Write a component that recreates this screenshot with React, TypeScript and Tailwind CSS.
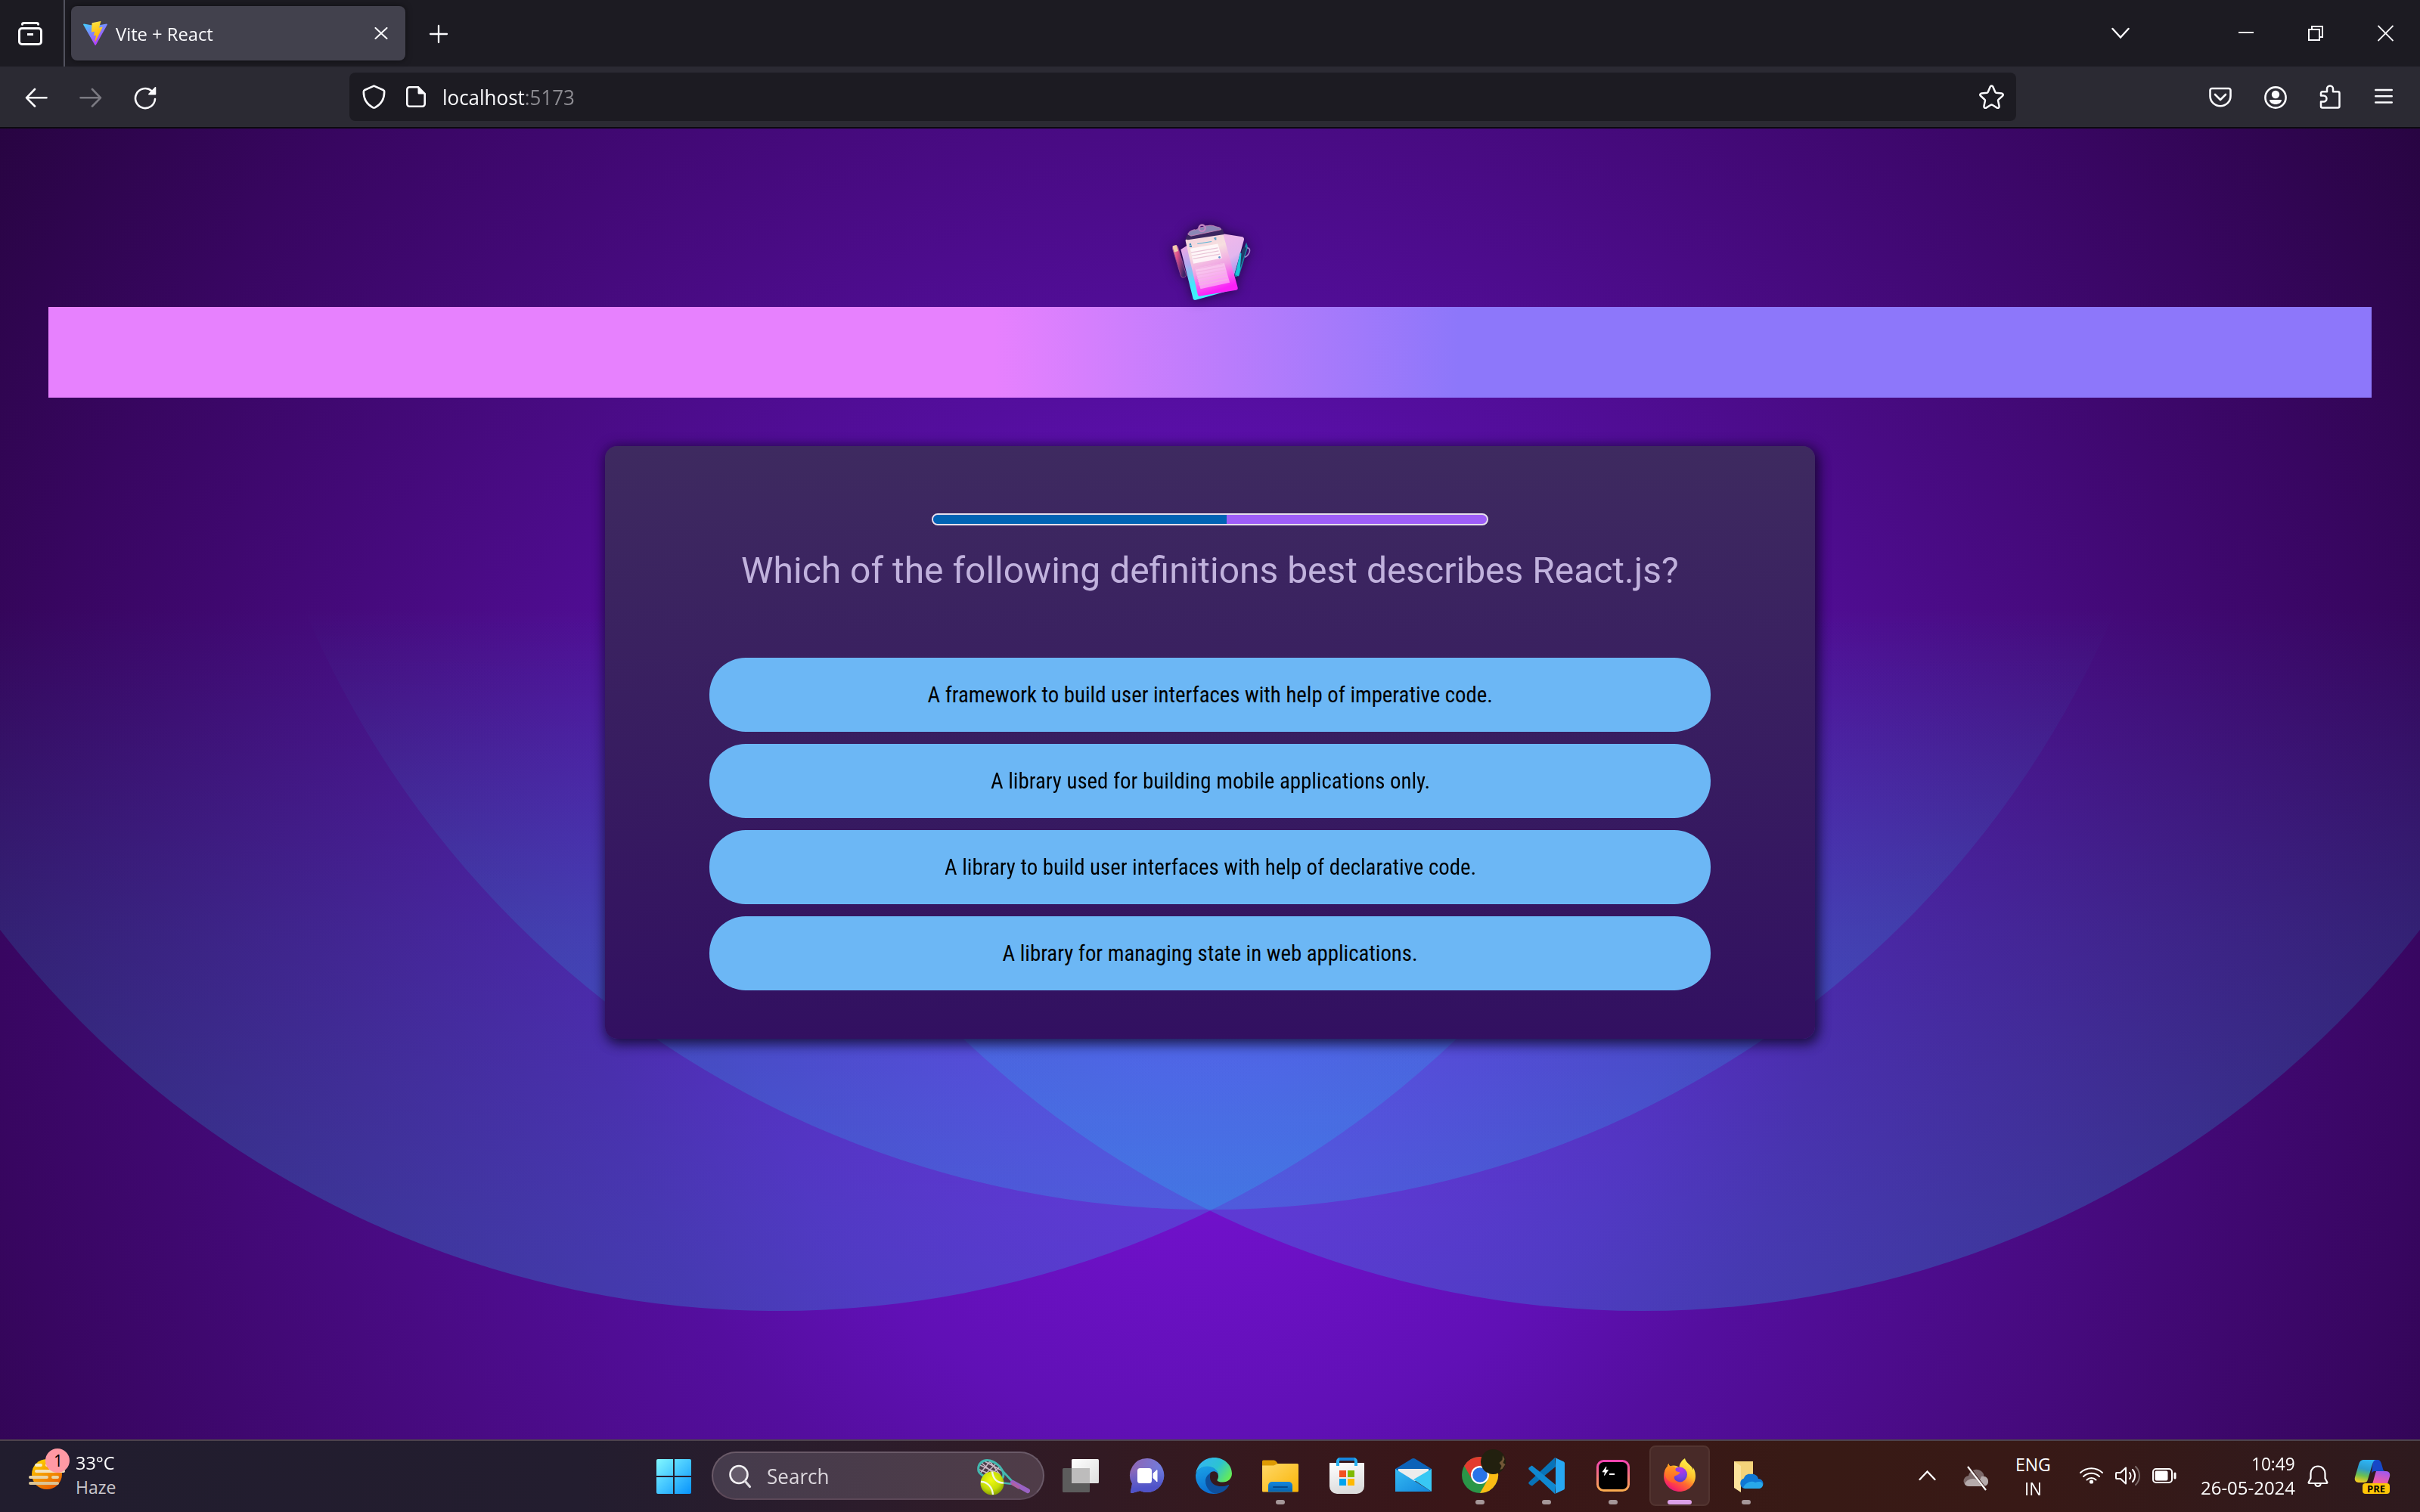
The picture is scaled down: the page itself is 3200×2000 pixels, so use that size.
import { useLayoutEffect, useRef, useState } from "react";
import type { ReactNode } from "react";

/** One line of text stretched horizontally so that it spans exactly `width` pixels. */
function Fit({ width, className = "", children }: { width: number; className?: string; children: ReactNode }) {
  const ref = useRef<HTMLSpanElement>(null);
  const [scale, setScale] = useState(1);
  useLayoutEffect(() => {
    if (ref.current) setScale(width / ref.current.offsetWidth);
  }, [width]);
  return (
    <span className={"block whitespace-nowrap " + className} style={{ width }}>
      <span ref={ref} className="inline-block origin-left" style={{ transform: `scaleX(${scale})` }}>
        {children}
      </span>
    </span>
  );
}

function ViteLogo() {
  return (
    <svg className="h-8 w-8 shrink-0" viewBox="0 0 32 32">
      <defs>
        <linearGradient id="viteA" x1="0" y1="0" x2="0.6" y2="1">
          <stop offset="0" stopColor="#41d1ff" />
          <stop offset="1" stopColor="#bd34fe" />
        </linearGradient>
        <linearGradient id="viteB" x1="0.4" y1="0" x2="0.6" y2="1">
          <stop offset="0" stopColor="#ffea83" />
          <stop offset="0.1" stopColor="#ffdd35" />
          <stop offset="1" stopColor="#ffa800" />
        </linearGradient>
      </defs>
      <path d="M31.8 4.8 16.8 31.5a.8.8 0 0 1-1.4 0L.2 4.8a.8.8 0 0 1 .9-1.2L16 6.3l14.9-2.7a.8.8 0 0 1 .9 1.2Z" fill="url(#viteA)" />
      <path d="M23 0 12 2.200a.5.500 0 0 0-.4.400l-.7 11.500a.4.400 0 0 0 .5.400l3.100-.7a.4.400 0 0 1 .5.500l-.9 4.500a.4.400 0 0 0 .5.500l1.900-.6a.4.400 0 0 1 .5.500l-1.500 7.100c-.1.400.5.700.7.300l.2-.2 9-18a.4.400 0 0 0-.5-.6l-3.200.6a.4.400 0 0 1-.5-.5l2.100-7.200A.4.400 0 0 0 23 0Z" fill="url(#viteB)" />
    </svg>
  );
}

function TabStrip() {
  return (
    <div className="flex h-[88px] items-start bg-[#1c1b22]">
      <svg className="mt-7 ml-6 h-8 w-8" viewBox="0 0 32 32" fill="none" stroke="#fbfbfe" strokeLinecap="round">
        <path d="M5.500 4.200C5.500 2.800 6.500 2.500 7.500 2.500h17c1 0 2 .3 2 1.700" strokeWidth="3" />
        <rect x="1.500" y="9.500" width="29" height="21" rx="3.500" strokeWidth="3" />
        <path d="M12 17.500h8" strokeWidth="3" strokeLinecap="butt" />
      </svg>
      <div className="ml-[28px] h-[88px] w-[2px] bg-[#52525e]" />
      <div className="mt-2 ml-2 flex h-[72px] w-[442px] rounded-lg bg-[#42414d] pt-5 pl-4 shadow-[0_0_8px_rgba(0,0,0,0.5)]">
        <ViteLogo />
        <Fit width={129} className="mt-px ml-[11px] text-[23px] leading-8 text-[#fbfbfe]">Vite + React</Fit>
        <svg className="mt-2 ml-[213px] h-4 w-[18px]" viewBox="0 0 18 16" stroke="#fbfbfe" strokeWidth="2" strokeLinecap="round">
          <path d="m1.500 1 15 14m0-14-15 14" />
        </svg>
      </div>
      <svg className="mt-8 ml-[31px] h-[26px] w-[26px]" viewBox="0 0 26 26" stroke="#fbfbfe" strokeWidth="2.300" strokeLinecap="round">
        <path d="M2 13h22M13 2v22" />
      </svg>
      <div className="grow" />
      <svg className="mt-9 mr-[144px] h-4 w-6" viewBox="0 0 24 16" fill="none" stroke="#fbfbfe" strokeWidth="2.400" strokeLinecap="round">
        <path d="m1.500 2 10.500 11.500L22.500 2" />
      </svg>
      <div className="mt-[42px] mr-[72px] h-[2px] w-5 bg-[#fbfbfe]" />
      <svg className="mt-[34px] mr-[72px] h-5 w-5" viewBox="0 0 20 20" fill="none" stroke="#fbfbfe" strokeWidth="2">
        <rect x="1" y="5" width="14" height="14" />
        <path d="M5 5V1h14v14h-4" />
      </svg>
      <svg className="mt-[33px] mr-[35px] h-[22px] w-[21px]" viewBox="0 0 21 22" stroke="#fbfbfe" strokeWidth="1.800">
        <path d="M.5 1 20.500 21M20.500 1 .5 21" />
      </svg>
    </div>
  );
}

function Toolbar() {
  return (
    <div className="flex h-[80px] items-start bg-[#2b2a33]">
      <svg className="mt-[28px] ml-[33px] h-[26px] w-[30px]" viewBox="0 0 30 26" fill="none" stroke="#fbfbfe" strokeWidth="2.600" strokeLinecap="round" strokeLinejoin="round">
        <path d="M28.500 13.300H2M13 2 2 13.300 13 24.500" />
      </svg>
      <svg className="mt-[28px] ml-[42px] h-[26px] w-[30px]" viewBox="0 0 30 26" fill="none" stroke="#7b7a82" strokeWidth="2.600" strokeLinecap="round" strokeLinejoin="round">
        <path d="M1.500 13.300H28M17 2l11 11.300L17 24.500" />
      </svg>
      <svg className="mt-[27px] ml-[42px] h-[30px] w-[30px]" viewBox="0 0 30 30" fill="none">
        <path d="M28 16A13 13 0 1 1 23.500 5.200" stroke="#fbfbfe" strokeWidth="2.600" strokeLinecap="round" />
        <path d="M29.300 1v8.500a1 1 0 0 1-1 1H20c-.9 0-1.300-1-.7-1.600l8.300-8.500c.6-.6 1.700-.3 1.700.6Z" fill="#fbfbfe" />
      </svg>
      <div className="mt-2 ml-[255px] flex h-16 w-[2204px] rounded-lg bg-[#1c1b22]">
        <svg className="mt-4 ml-[17px] h-8 w-[31px]" viewBox="0 0 31 32" fill="none" stroke="#fbfbfe" strokeWidth="2.600" strokeLinejoin="round">
          <path d="M15.500 1.600 27.600 7c1 .5 1.600 1.300 1.600 2.400 0 9.600-4.600 16.600-12 20.700-1 .5-2.400.5-3.400 0C6.400 26 1.800 19 1.800 9.400 1.800 8.300 2.400 7.500 3.400 7Z" />
        </svg>
        <svg className="mt-[18px] ml-[27px] h-[28px] w-[26px]" viewBox="0 0 26 28" fill="none">
          <path d="M4.500 1.300H16l8.700 8.700v13.500a3.200 3.200 0 0 1-3.200 3.200h-17a3.200 3.200 0 0 1-3.200-3.200v-19a3.200 3.200 0 0 1 3.200-3.200Z" stroke="#fbfbfe" strokeWidth="2.600" />
          <path d="M15.500 1v8a1.500 1.500 0 0 0 1.500 1.500h8Z" fill="#fbfbfe" />
        </svg>
        <Fit width={175} className="mt-[15px] ml-[22px] text-[27px] leading-9 text-[#fbfbfe]">
          localhost<span className="text-[#8c8b91]">:5173</span>
        </Fit>
        <svg className="mt-4 ml-auto mr-4 h-[32px] w-[33px]" viewBox="0 0 33 32" fill="none" stroke="#fbfbfe" strokeWidth="2.500" strokeLinejoin="round">
          <path d="M14.700 2.800c.7-1.600 2.900-1.600 3.600 0l3 7c.2.500.7.800 1.200.9l7.400.7c1.700.2 2.400 2.200 1.100 3.400l-5.400 4.900c-.5.400-.6 1-.5 1.600l1.500 7.200c.4 1.700-1.400 3-2.900 2.100l-6.200-3.800a2 2 0 0 0-2 0l-6.200 3.800c-1.500.9-3.300-.4-2.900-2.100l1.500-7.200c.1-.6 0-1.200-.5-1.600L2 14.800c-1.300-1.200-.6-3.200 1.100-3.400l7.400-.7c.5-.1 1-.4 1.200-.9Z" />
        </svg>
      </div>
      <svg className="mt-[27px] ml-[255px] h-[27px] w-[30px]" viewBox="0 0 30 27" fill="none" stroke="#fbfbfe" strokeWidth="2.600" strokeLinecap="round" strokeLinejoin="round">
        <path d="M4 2h22a2.500 2.500 0 0 1 2.500 2.500V12a13.500 13.200 0 0 1-27 0V4.500A2.500 2.500 0 0 1 4 2Z" />
        <path d="m8 10 7 7 7-7" />
      </svg>
      <svg className="mt-[26px] ml-[43px] h-[30px] w-[30px]" viewBox="0 0 30 30">
        <circle cx="15" cy="15" r="13.600" fill="none" stroke="#fbfbfe" strokeWidth="2.600" />
        <circle cx="15" cy="11" r="5.200" fill="#fbfbfe" />
        <path d="M7 18h16c0 3.800-3.800 6-8 6s-8-2.200-8-6Z" fill="#fbfbfe" />
      </svg>
      <svg className="mt-[24px] ml-[43px] h-[32px] w-[28px]" viewBox="0 0 28 32" fill="none" stroke="#fbfbfe" strokeWidth="2.500" strokeLinejoin="round">
        <path d="M4 9.300h6V5.500a4 4 0 0 1 8 0v3.800h6.500a2 2 0 0 1 2 2V28.500a2 2 0 0 1-2 2H4a2 2 0 0 1-2-2V22.500h3.500a4 4 0 0 0 0-8H2v-3.200a2 2 0 0 1 2-2Z" />
      </svg>
      <svg className="mt-[29px] ml-[45px] h-[21px] w-[24px]" viewBox="0 0 24 21" stroke="#fbfbfe" strokeWidth="2.400" strokeLinecap="round">
        <path d="M1.200 2h21.600M1.200 10.300h21.600M1.200 18.500h21.600" />
      </svg>
    </div>
  );
}

function Backdrop() {
  return (
    <svg className="absolute inset-0 h-full w-full" viewBox="0 170 3200 1734" preserveAspectRatio="none">
      <defs>
        <radialGradient id="base" gradientUnits="userSpaceOnUse" cx="1600" cy="1300" r="2000">
          <stop offset="0" stopColor="#7914dc" />
          <stop offset="0.15" stopColor="#7011ca" />
          <stop offset="0.3" stopColor="#6010b5" />
          <stop offset="0.4" stopColor="#540e9e" />
          <stop offset="0.565" stopColor="#490b84" />
          <stop offset="0.8" stopColor="#380661" />
          <stop offset="1" stopColor="#26043e" />
        </radialGradient>
        <linearGradient id="disc" gradientUnits="userSpaceOnUse" x1="0" y1="800" x2="0" y2="1734">
          <stop offset="0" stopColor="#10e8ff" stopOpacity="0" />
          <stop offset="0.465" stopColor="#10e8ff" stopOpacity="0.12" />
          <stop offset="0.857" stopColor="#10e8ff" stopOpacity="0.19" />
          <stop offset="1" stopColor="#10e8ff" stopOpacity="0.205" />
        </linearGradient>
      </defs>
      <rect x="0" y="170" width="3200" height="1734" fill="url(#base)" />
      <circle cx="1028" cy="434" r="1300" fill="url(#disc)" />
      <circle cx="2172" cy="434" r="1300" fill="url(#disc)" />
      <circle cx="1600" cy="300" r="1300" fill="url(#disc)" />
    </svg>
  );
}

function QuizLogo() {
  return (
    <svg className="h-[116px] w-[126px] drop-shadow-[0_0_8px_rgba(12,5,32,0.7)]" viewBox="1 0 120 111">
      <defs>
        <linearGradient id="sheet" x1="0.2" y1="0" x2="0.500" y2="1">
          <stop offset="0" stopColor="#f3d3dc" />
          <stop offset="0.3" stopColor="#f7dfe0" />
          <stop offset="0.6" stopColor="#f0a0e4" />
          <stop offset="0.95" stopColor="#fb20f8" />
        </linearGradient>
        <linearGradient id="backSheet" x1="0.3" y1="0" x2="0.600" y2="1">
          <stop offset="0" stopColor="#f0b8ea" />
          <stop offset="0.5" stopColor="#e3b6ee" />
          <stop offset="1" stopColor="#8f8cf0" />
        </linearGradient>
        <linearGradient id="cyanSheet" x1="0" y1="0" x2="0.400" y2="1">
          <stop offset="0" stopColor="#f4a8e4" />
          <stop offset="0.35" stopColor="#b4a8f0" />
          <stop offset="0.7" stopColor="#3fe9fb" />
          <stop offset="1" stopColor="#40f4fc" />
        </linearGradient>
        <linearGradient id="pen" x1="0" y1="0" x2="0.300" y2="1">
          <stop offset="0" stopColor="#f0b8a8" />
          <stop offset="0.4" stopColor="#e0508c" />
          <stop offset="1" stopColor="#3c2468" />
        </linearGradient>
      </defs>
      <path d="M76 22 102 26c2 1 2.500 2.500 2 4L91 77 80 80Z" fill="url(#backSheet)" />
      <path d="M24 42 32 37 52 95 88 90 86 94 43 106c-2 .5-3-.5-3.500-2Z" fill="url(#cyanSheet)" />
      <path d="M30 31c0-1 .5-2 1.500-2L75 22c1.500 0 2.500.5 3 2l18 66c.5 2 0 3-2 3.500L49 101c-2 .5-3 0-3.500-2Z" fill="url(#sheet)" />
      <path d="M30 29 32 24 77 16l2 7-46 7Z" fill="#3b2660" />
      <path d="M33 23c1-4 5-5 8-6 4 1 5-3 9-3 3 0 4-2 8-2 4-1 8 0 10 1 3 1 7 1 7 4L37 25Z" fill="#8c87b6" stroke="#cc80b4" strokeWidth="0.800" />
      <circle cx="51" cy="15" r="4" fill="none" stroke="#c486c2" strokeWidth="2.200" />
      <path d="m35 36 2-1m-2 3h3" stroke="#2b87b8" strokeWidth="2" />
      <path d="m45 35 18-3" stroke="#58b4d6" strokeWidth="1" />
      <path d="m66 28 3-.5m-2 2 2-.3" stroke="#4f9cc8" strokeWidth="1.500" />
      <path d="m36 41 35-6 5 18-36 7Z" fill="#fffafc" opacity="0.85" />
      <path d="m42 66 37-7 7 25-37 8Z" fill="#ffe4f8" opacity="0.5" />
      <path d="m37 46 34-6m-33 10 34-6m-32.500 10 34-6" stroke="#e9c4d6" strokeWidth="1.200" />
      <path d="m42 67 36-7m-35 11 36-7m-35 11 36-7m-35 11 36-7m-35 11 36-7m-35 11 36-7" stroke="#f3b2e4" strokeWidth="1.200" />
      <circle cx="73" cy="52" r="1.300" fill="#5a8fc8" />
      <g transform="rotate(-17 23 58)">
        <rect x="19" y="36" width="7" height="42" rx="3" fill="url(#pen)" stroke="#9a4c94" strokeWidth="0.800" />
        <path d="M20 36h5v8h-5Z" fill="#f0cdae" />
      </g>
      <path d="m107 33 2 6-11 36-5 2-1-4Z" fill="#1a88a8" />
      <path d="m99 46 5 3-7 27-4-2Z" fill="#1cc4d8" />
      <path d="m101 43 4-5 2 3-8 26Z" fill="#223c68" />
      <path d="M108 40c6 0 3 9-3 12" fill="none" stroke="#a284cc" strokeWidth="1.600" />
    </svg>
  );
}

const answers = [
  { text: "A framework to build user interfaces with help of imperative code.", width: 747 },
  { text: "A library used for building mobile applications only.", width: 581 },
  { text: "A library to build user interfaces with help of declarative code.", width: 703 },
  { text: "A library for managing state in web applications.", width: 549 },
];

function QuizPage() {
  return (
    <main className="relative h-[1734px] overflow-hidden">
      <Backdrop />
      <div className="relative flex flex-col items-center">
        <div className="mt-[116px]">
          <QuizLogo />
        </div>
        <div className="mt-1 h-[120px] w-[3072px] bg-[linear-gradient(90deg,#e781fe_40.700%,#8d77fa_60.700%)]" />
        <section className="mt-16 flex h-[784px] w-[1600px] flex-col items-center rounded-2xl bg-[linear-gradient(180deg,#3e2a60_0%,#321061_100%)] shadow-[2px_2px_16px_2px_rgba(12,5,32,0.6),4px_8px_16px_0_rgba(12,5,32,0.4)]">
          <div className="mt-[89px] h-4 w-[736px] overflow-hidden rounded-lg border-2 border-[#e6e0ec] bg-[#9e5ef8]">
            <div className="h-full w-[53%] bg-[#0063b4]" />
          </div>
          <Fit width={1240} className="mt-8 font-['Roboto'] text-[48px] leading-[56px] text-[#c1b2dd]">
            Which of the following definitions best describes React.js?
          </Fit>
          <div className="mt-[87px] flex flex-col gap-4">
            {answers.map((a) => (
              <div key={a.text} className="flex h-[98px] w-[1324px] items-center justify-center rounded-[48px] bg-[#6cb7f5]">
                <Fit width={a.width} className="font-['Roboto_Condensed','Roboto'] text-[28.800px] leading-9 text-black [font-stretch:75%]">
                  {a.text}
                </Fit>
              </div>
            ))}
          </div>
        </section>
      </div>
    </main>
  );
}

function WeatherIcon() {
  return (
    <svg className="h-[56px] w-[56px]" viewBox="0 0 56 56">
      <defs>
        <linearGradient id="sun" x1="0.2" y1="0" x2="0.800" y2="1">
          <stop offset="0" stopColor="#ffd400" />
          <stop offset="1" stopColor="#e85400" />
        </linearGradient>
      </defs>
      <circle cx="24" cy="34" r="20" fill="url(#sun)" />
      <g strokeWidth="4" strokeLinecap="round">
        <path d="M10 22h6M24 22h6" stroke="#f7ecc4" />
        <path d="M10 30h36" stroke="#f3e2bc" />
        <path d="M2 38h22M32 38h6" stroke="#ead4a4" />
        <path d="M2 46h36" stroke="#dcc494" />
      </g>
      <circle cx="38" cy="16" r="16" fill="#ff99a4" />
    </svg>
  );
}

function StartIcon() {
  return (
    <svg className="h-[46px] w-[46px]" viewBox="0 0 46 46">
      <defs>
        <linearGradient id="win" gradientUnits="userSpaceOnUse" x1="0" y1="0" x2="46" y2="46">
          <stop offset="0" stopColor="#82f8ff" />
          <stop offset="0.5" stopColor="#44c6ff" />
          <stop offset="1" stopColor="#0893fb" />
        </linearGradient>
      </defs>
      <path d="M2 0h20v22H0V2a2 2 0 0 1 2-2ZM24 0h20a2 2 0 0 1 2 2v20H24ZM0 24h22v22H2a2 2 0 0 1-2-2ZM24 24h22v20a2 2 0 0 1-2 2H24Z" fill="url(#win)" />
    </svg>
  );
}

function TennisIcon() {
  return (
    <svg className="h-[48px] w-[70px]" viewBox="0 0 70 48">
      <defs>
        <radialGradient id="ball" cx="0.45" cy="0.35" r="0.7">
          <stop offset="0" stopColor="#f2fb10" />
          <stop offset="0.6" stopColor="#c4dc08" />
          <stop offset="1" stopColor="#7d9600" />
        </radialGradient>
      </defs>
      <g stroke="#d9c8d4" strokeWidth="1.500">
        <path d="m4 8 26 12M3 14l24 10M10 3l24 13M4 19 18 2M9 22 26 5M15 24 31 9M5 4l22 20M17 3l14 19" opacity="0.9" />
      </g>
      <path d="M2 16C0 6 8 0 17 2c10 3 17 11 18 18 0 3-1 6-4 7-6 2-14 1-20-3-5-3-8-5-9-8Z" fill="none" stroke="#43b9b0" strokeWidth="3" />
      <path d="M34 16 48 31M30 31l17 2" stroke="#43b9b0" strokeWidth="2.600" fill="none" />
      <path d="m47 31 20 11" stroke="#9a62c4" strokeWidth="6" strokeLinecap="round" />
      <path d="m46 32 10 6" stroke="#b060a4" strokeWidth="4" />
      <circle cx="20" cy="32" r="15.500" fill="url(#ball)" />
      <path d="M5 30c9 0 15 7 16 17M20 16.500c1 9 6 15 15 15" fill="none" stroke="#f4f8e4" strokeWidth="2.400" />
    </svg>
  );
}

function TaskViewIcon() {
  return (
    <svg className="h-12 w-12" viewBox="0 0 48 48">
      <defs>
        <linearGradient id="tvA" x1="0" y1="0" x2="1" y2="1">
          <stop offset="0" stopColor="#ffffff" />
          <stop offset="1" stopColor="#dedede" />
        </linearGradient>
      </defs>
      <rect x="12" y="2" width="36" height="32" rx="1.500" fill="url(#tvA)" />
      <rect x="0" y="14" width="36" height="32" rx="1.500" fill="#5c5c5c" />
      <rect x="12" y="14" width="24" height="20" fill="#bdbcbc" />
    </svg>
  );
}

function ChatIcon() {
  return (
    <svg className="h-12 w-12" viewBox="0 0 48 48">
      <defs>
        <linearGradient id="chat" x1="0" y1="0.3" x2="1" y2="0.6">
          <stop offset="0" stopColor="#8f66b4" />
          <stop offset="1" stopColor="#6c80e4" />
        </linearGradient>
        <linearGradient id="chat2" x1="0.4" y1="0" x2="0.500" y2="1">
          <stop offset="0.3" stopColor="#5059c9" stopOpacity="0" />
          <stop offset="0.85" stopColor="#4f52c8" />
        </linearGradient>
      </defs>
      {["url(#chat)", "url(#chat2)"].map((fill) => (
        <path key={fill} d="M24.500 1a22.500 22.500 0 1 1-10 43L4 47c-1.500.3-2.500-.8-2-2l2-10.500A22.500 22.500 0 0 1 24.500 1Z" fill={fill} />
      ))}
      <rect x="11" y="14" width="19" height="20" rx="3.500" fill="#fff" />
      <path d="m32 21 5-4.500V32l-5-5Z" fill="#fff" stroke="#fff" strokeLinejoin="round" />
    </svg>
  );
}

function EdgeIcon() {
  return (
    <svg className="h-12 w-12" viewBox="0 0 48 48">
      <defs>
        <linearGradient id="edA" x1="0" y1="0.200" x2="1" y2="0.700">
          <stop offset="0" stopColor="#35b4f4" />
          <stop offset="0.55" stopColor="#2cc3d2" />
          <stop offset="1" stopColor="#66ec54" />
        </linearGradient>
        <linearGradient id="edB" x1="0.200" y1="0" x2="0.500" y2="1">
          <stop offset="0" stopColor="#1aa0e6" />
          <stop offset="1" stopColor="#0a6cd0" />
        </linearGradient>
      </defs>
      <path d="M.3 21C2 8.500 12.500 0 24.500 0 38 0 48 10 48 21c0 7-5.500 11.500-12 11.500-4 0-7.500-1.200-7.500-2.600 0-1 1.500-1.800 1.500-5.400 0-7-6.500-12.500-14.500-12.500C8 12 2.500 16 .3 21Z" fill="url(#edA)" />
      <path d="M0 23c1.500-7 8-11.500 15-11.500C23.500 11.500 30 17 30 24c-.5-3.500-3-5.700-6-5.700-4.500 0-7 4-7 9 0 11 9 18 20 16-4 3-8.500 4.700-13 4.700C10.500 48 0 37 0 24Z" fill="url(#edB)" />
      <path d="M19.500 20.500C15 23 13 27 13 31c0 10 8.500 17 15 16.600 7-.6 13-5 16-10.600.4-.8-.2-1.200-1-.8-10 4.500-23.500 1-24-9.700 0-2.300.3-4.500.5-6Z" fill="#0e4f9c" />
    </svg>
  );
}

function ExplorerIcon() {
  return (
    <svg className="h-12 w-12" viewBox="0 0 48 48">
      <defs>
        <linearGradient id="fold" x1="0" y1="0" x2="1" y2="1">
          <stop offset="0" stopColor="#ffd868" />
          <stop offset="1" stopColor="#f9b506" />
        </linearGradient>
        <linearGradient id="foldB" x1="0" y1="0" x2="0" y2="1">
          <stop offset="0" stopColor="#1687dc" />
          <stop offset="1" stopColor="#0563b0" />
        </linearGradient>
      </defs>
      <path d="M1.500 3.500h14c2 0 4 2.500 5 4.500H46v8H0V5a1.500 1.500 0 0 1 1.500-1.500Z" fill="#dd9a02" />
      <path d="M0 10.500h15c2 0 4-2.500 6-2.500h25.500A1.500 1.500 0 0 1 48 9.500V44a1.500 1.500 0 0 1-1.500 1.500h-45A1.500 1.500 0 0 1 0 44Z" fill="url(#fold)" />
      <path d="M8 45.500V37a5 5 0 0 1 5-5h22a5 5 0 0 1 5 5v8.500Z" fill="url(#foldB)" />
      <path d="M15 39h18" stroke="#064a8c" strokeWidth="2" strokeLinecap="round" />
    </svg>
  );
}

function StoreIcon() {
  return (
    <svg className="h-12 w-12" viewBox="0 0 48 48">
      <defs>
        <linearGradient id="bag" x1="0" y1="0" x2="0.300" y2="1">
          <stop offset="0" stopColor="#ffffff" />
          <stop offset="1" stopColor="#dcdcdc" />
        </linearGradient>
      </defs>
      <path d="M1 7h46v31a10 10 0 0 1-10 10H11A10 10 0 0 1 1 38Z" fill="url(#bag)" />
      <path d="M12 11V5a3 3 0 0 1 3-3h18a3 3 0 0 1 3 3v6" fill="none" stroke="#26b0f0" strokeWidth="4" />
      <path d="M14 2h20" stroke="#1486e0" strokeWidth="4" />
      <path d="M14 17h9v9h-9Z" fill="#f25022" />
      <path d="M25 17h9v9h-9Z" fill="#7fba00" />
      <path d="M14 28h9v9h-9Z" fill="#00a4ef" />
      <path d="M25 28h9v9h-9Z" fill="#ffb900" />
    </svg>
  );
}

function MailIcon() {
  return (
    <svg className="h-12 w-12" viewBox="0 0 48 48">
      <defs>
        <linearGradient id="mailA" x1="0" y1="0" x2="1" y2="1">
          <stop offset="0" stopColor="#35baf2" />
          <stop offset="1" stopColor="#1286dc" />
        </linearGradient>
      </defs>
      <path d="M0 15 22 1.500a4 4 0 0 1 4 0L48 15v3H0Z" fill="#0c62b8" />
      <path d="M4 15h40v10L24 32 4 24Z" fill="#ececec" />
      <path d="M48 15v30L24 29Z" fill="#38c8f4" />
      <path d="M0 15 48 45H0Z" fill="url(#mailA)" />
    </svg>
  );
}

function ChromeIcon() {
  return (
    <svg className="h-[60px] w-[60px]" viewBox="0 0 60 60">
      <circle cx="24" cy="35" r="24" fill="#2a9648" />
      <path d="M24 59a24 24 0 0 0 20.800-36H24v12l10.400 6Z" fill="#fbbc14" />
      <path d="M3.200 23A24 24 0 0 1 44.800 23H24L13.600 41Z" fill="#e33b2e" />
      <circle cx="24" cy="35" r="12" fill="#fff" />
      <circle cx="24" cy="35" r="9.800" fill="#2a74e8" />
      <circle cx="41.500" cy="17.500" r="16.500" fill="#22200f" />
      <path d="m54 9 2.500 5-2 5 3 2-4 6-3 1 2-5-3-4 4-4Z" fill="#a87c50" opacity="0.600" />
    </svg>
  );
}

function CodeIcon() {
  return (
    <svg className="h-12 w-12" viewBox="0 0 48 48">
      <path d="M35 0 .8 32.300a2 2 0 0 0 0 2.600l2.700 2c.7.500 1.500.5 2.100 0L36 12Z" fill="#0873b8" />
      <path d="M3.500 11.200.8 13.300a2 2 0 0 0 0 2.600L35 48l1-12L5.600 11.200c-.6-.5-1.400-.5-2.100 0Z" fill="#1088d0" />
      <path d="M35 0 46.500 5.300a2.500 2.500 0 0 1 1.500 2.300v32.800a2.500 2.500 0 0 1-1.500 2.300L35 48c.6-.5 1-1 1-2.500v-43C36 1 35.600.5 35 0Z" fill="#27a7f2" />
    </svg>
  );
}

function TerminalIcon() {
  return (
    <svg className="h-12 w-12" viewBox="0 0 48 48">
      <defs>
        <linearGradient id="term" x1="0" y1="0" x2="0" y2="1">
          <stop offset="0" stopColor="#f444b0" />
          <stop offset="1" stopColor="#fcac50" />
        </linearGradient>
      </defs>
      <rect x="3.500" y="4.500" width="41" height="39" rx="8" fill="#000" stroke="url(#term)" strokeWidth="3" />
      <path d="m15 12-5 7h3.500l-1 4.500 5-7H14Z" fill="#fff" stroke="#fff" strokeWidth="0.800" />
      <path d="M19 22h7" stroke="#fff" strokeWidth="2" />
    </svg>
  );
}

function FirefoxIcon() {
  return (
    <svg className="h-12 w-12" viewBox="0 0 48 48">
      <defs>
        <linearGradient id="fxA" x1="0.800" y1="0.100" x2="0.250" y2="1">
          <stop offset="0" stopColor="#fff24a" />
          <stop offset="0.35" stopColor="#ffc02c" />
          <stop offset="0.6" stopColor="#ff6a30" />
          <stop offset="0.85" stopColor="#fb2f58" />
          <stop offset="1" stopColor="#d8108c" />
        </linearGradient>
        <radialGradient id="fxB" cx="0.600" cy="0.200" r="0.900">
          <stop offset="0" stopColor="#b833e8" />
          <stop offset="0.5" stopColor="#7a44e6" />
          <stop offset="1" stopColor="#5038c0" />
        </radialGradient>
        <linearGradient id="fxC" x1="0" y1="0" x2="0" y2="1">
          <stop offset="0" stopColor="#ffa11e" />
          <stop offset="1" stopColor="#ff5a2c" />
        </linearGradient>
      </defs>
      <path d="M31 1c1 5 5.500 7.500 8.500 11 1.500 1.500 2 3 2.300 4.500.4-1 .3-2.500 0-3.500 2.500 4 3.200 8 3.200 11.500C45 36 35.500 45 24 45S3 36 3 24.500C3 19 5 14.500 8 11.500c0-1.300.5-2 1.500-3.500.3 1.500.8 2.500 2 3.500 5-2 9-.5 12 1.500 0-5 4-10 7.500-12Z" fill="url(#fxA)" />
      <circle cx="24" cy="22.500" r="10" fill="url(#fxB)" />
      <path d="M8 11.500c0-1.300.5-2 1.500-3.500.3 1.500.8 2.500 2 3.500 3-.8 6 .3 7.500 2.500-1 1.500-.5 3 .5 4 1.500 1 4 1 5 1.500-.5 2.500-3 3.500-6 4.500-1.500.6-2 2-1.500 3.500.7 3 4 4.700 7.500 4.500-8 4-20 0-20-12C4 16.500 6 13.500 8 11.500Z" fill="url(#fxC)" />
    </svg>
  );
}

function OneDriveFolderIcon() {
  return (
    <svg className="h-12 w-12" viewBox="0 0 48 48">
      <path d="M8 5h25v33H8Z" fill="#f4d37a" />
      <path d="m8 5 9 6v35l-9-6Z" fill="#fbe39c" />
      <path d="M22 41a7 7 0 0 1-1-13.500c1-4 5-6.500 9-5.500 2-1 9 0 10 6 4 0 6.500 3 6.500 6.500S44 41 40.500 41Z" fill="#0f78d4" />
      <path d="M20 40c3-7 11-10 16-7 4-1.500 10-2 10 3 0 3-3 5-6 5H23Z" fill="#28a8ea" />
    </svg>
  );
}

const apps: { icon: ReactNode; running?: boolean; active?: boolean }[] = [
  { icon: <TaskViewIcon /> },
  { icon: <ChatIcon /> },
  { icon: <EdgeIcon /> },
  { icon: <ExplorerIcon />, running: true },
  { icon: <StoreIcon /> },
  { icon: <MailIcon /> },
  { icon: <ChromeIcon />, running: true },
  { icon: <CodeIcon />, running: true },
  { icon: <TerminalIcon />, running: true },
  { icon: <FirefoxIcon />, active: true },
  { icon: <OneDriveFolderIcon />, running: true },
];

function TrayIcons() {
  return (
    <svg className="mt-[32px] ml-[37px] h-[28px] w-[130px]" viewBox="0 0 130 28" fill="none" stroke="#fff" strokeWidth="2" strokeLinecap="round">
      <path d="M2 10a21 21 0 0 1 29 0M6 15a15 15 0 0 1 21 0M10.500 19.500a8.500 8.500 0 0 1 12 0" />
      <circle cx="16.500" cy="22" r="2.600" fill="#fff" stroke="none" />
      <path d="M50 10h5l7-6.500v21L55 18h-5c-.6 0-1-.4-1-1v-6c0-.6.400-1 1-1Z" strokeLinejoin="round" />
      <path d="M67 10a6 6 0 0 1 0 8M71 6a12 12 0 0 1 0 16" />
      <path d="M75 2a17 17 0 0 1 0 24" stroke="#7b6a68" />
      <rect x="98" y="5" width="25" height="18" rx="4" />
      <rect x="101.500" y="8.500" width="15" height="11" rx="1" fill="#fff" />
      <path d="M127 11v6" strokeWidth="3" />
    </svg>
  );
}

function CopilotIcon() {
  return (
    <svg className="h-[48px] w-[48px]" viewBox="0 0 48 48">
      <defs>
        <linearGradient id="coA" x1="0.500" y1="0" x2="0.300" y2="1">
          <stop offset="0" stopColor="#2eb4f4" />
          <stop offset="0.4" stopColor="#2c9ccc" />
          <stop offset="0.7" stopColor="#6cc050" />
          <stop offset="1" stopColor="#f8cc20" />
        </linearGradient>
        <linearGradient id="coB" x1="0.600" y1="0" x2="0.300" y2="1">
          <stop offset="0" stopColor="#a458ec" />
          <stop offset="0.6" stopColor="#ec5ca8" />
          <stop offset="1" stopColor="#fc8c60" />
        </linearGradient>
      </defs>
      <path d="M25 2h6c3 0 4 2 5 5l2 7c.5 2 1 2.500 3 3H27c-2 0-3 1-4 3Z" fill="#1648c8" />
      <path d="M12 2h17c-3 0-4 3-5 6l-6 20c-1 3-2 4-5 4H6c-4 0-6-3-5-7L6 8c1-4 3-6 6-6Z" fill="url(#coA)" />
      <path d="M29 17h13c4 0 6 3 5 7l-5 16H20c2-1 3-3 4-6l4-14c.3-1 .6-2 1-3Z" fill="url(#coB)" />
    </svg>
  );
}

function Taskbar() {
  return (
    <footer className="flex h-[96px] items-start border-t-2 border-[#4d434c] bg-[linear-gradient(90deg,#211d2e_0%,#231d2f_24%,#2c1c2b_36%,#35191f_50%,#3a1618_60%,#381a15_75%,#381916_84%,#2e1a1e_100%)]">
      <div className="relative mt-[10px] ml-[38px]">
        <WeatherIcon />
        <span className="absolute top-[2px] left-[33px] text-[21px] leading-7 text-black">1</span>
      </div>
      <div className="mt-[13px] ml-[6px] text-[23px] leading-8">
        <Fit width={52} className="text-white">33°C</Fit>
        <Fit width={53} className="text-[#c9c6cc]">Haze</Fit>
      </div>
      <div className="mt-[24px] ml-[715px]">
        <StartIcon />
      </div>
      <div className="mt-[14px] ml-[27px] flex h-16 w-[440px] rounded-full border-2 border-[#6a5a68] border-b-[#5c4858] bg-[linear-gradient(90deg,#453b4c,#4f3c48)]">
        <svg className="mt-[15px] ml-[21px] h-[32px] w-[30px]" viewBox="0 0 30 32" fill="none">
          <circle cx="13" cy="13.500" r="11.500" stroke="#f2f0f3" strokeWidth="2.600" fill="#655b6a" />
          <path d="m21.500 22.500 6 7" stroke="#dedbe0" strokeWidth="3.200" strokeLinecap="round" />
        </svg>
        <Fit width={83} className="mt-[13px] ml-[20px] text-[27px] leading-9 text-[#dcd7dd]">Search</Fit>
        <div className="mt-2 ml-auto mr-[17px]">
          <TennisIcon />
        </div>
      </div>
      <div className="mt-[6px] ml-[8px] flex gap-2">
        {apps.map((app, i) => (
          <div
            key={i}
            className={
              app.active
                ? "relative flex h-20 w-20 items-center justify-center rounded-lg border-2 border-[#523430] bg-[#482a28]"
                : "relative flex h-20 w-20 items-center justify-center"
            }
          >
            <div className={i === 6 ? "mb-3 ml-3" : ""}>{app.icon}</div>
            {app.running && <div className="absolute bottom-[2px] left-[34px] h-[6px] w-3 rounded-full bg-[#a59799]" />}
            {app.active && <div className="absolute bottom-0 left-[22px] h-[6px] w-8 rounded-full bg-[#dca0e8]" />}
          </div>
        ))}
      </div>
      <svg className="mt-[39px] ml-[188px] h-[14px] w-[23px]" viewBox="0 0 23 14" fill="none" stroke="#fff" strokeWidth="2.300" strokeLinecap="round">
        <path d="m1.500 12 10-10.500 10 10.500" />
      </svg>
      <svg className="mt-[32px] ml-[36px] h-[36px] w-[34px]" viewBox="0 0 34 36">
        <path d="M8 28a7 7 0 0 1-1-14C8 7 18 2 25 9c2 2 2.500 4 2.500 6 4 .5 5.500 3.500 5.500 6.500 0 4-3 6.500-6.500 6.500Z" fill="#7c6a6a" />
        <path d="M2 25c1-5 10-9 15-6l11 9H8c-3 0-5-1-6-3ZM24 15c5-1 9 2 9 6.500 0 3-1 5-4 6l-7-8Z" fill="#b5abab" />
        <path d="m8 3 22 30" stroke="#381916" strokeWidth="3" />
        <path d="m6 2 24 31" stroke="#fff" strokeWidth="2.200" />
      </svg>
      <div className="mt-[15px] ml-[35px] flex flex-col items-center text-[23px] leading-8 text-white">
        <Fit width={47}>ENG</Fit>
        <Fit width={23}>IN</Fit>
      </div>
      <TrayIcons />
      <div className="mt-[14px] ml-[31px] flex flex-col items-end text-[23px] leading-8 text-white">
        <Fit width={58}>10:49</Fit>
        <Fit width={125}>26-05-2024</Fit>
      </div>
      <svg className="mt-[32px] ml-[16px] h-[30px] w-[28px]" viewBox="0 0 28 30" fill="none" stroke="#fff" strokeWidth="2.200" strokeLinecap="round" strokeLinejoin="round">
        <path d="M14 1.500c-5.500 0-9.500 4.300-9.500 9.500v6.500l-2.800 5.300c-.3.700.1 1.200.8 1.200h23c.7 0 1.100-.5.8-1.200l-2.800-5.300V11c0-5.200-4-9.500-9.500-9.500Z" />
        <path d="M10.500 25.500c.6 1.700 2 2.500 3.500 2.500s2.900-.8 3.500-2.500" />
      </svg>
      <div className="relative mt-[23px] ml-[34px] h-[48px] w-[48px]">
        <CopilotIcon />
        <div className="absolute top-[33px] left-[11px] flex h-[14px] w-[36px] items-center justify-center rounded-[4px] bg-[#fdc608] text-[13px] leading-[14px] font-bold text-black">
          PRE
        </div>
      </div>
    </footer>
  );
}

export default function App() {
  return (
    <div className="h-[2000px] w-[3200px] overflow-hidden font-['Open_Sans','Noto_Sans',sans-serif]">
      <TabStrip />
      <Toolbar />
      <div className="h-[2px] bg-[#0c0a10]" />
      <QuizPage />
      <Taskbar />
    </div>
  );
}
